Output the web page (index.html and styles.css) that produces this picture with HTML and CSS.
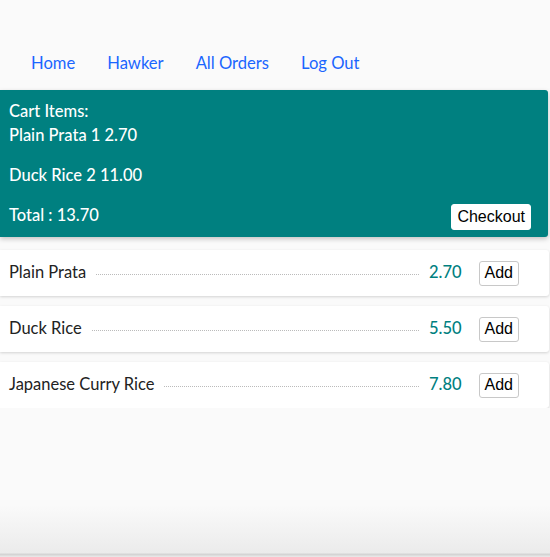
FILE: index.html
```html
<!DOCTYPE html>
<html>
<head>
<meta charset="utf-8">
<link rel="stylesheet" href="styles.css">
</head>
<body>
<nav class="nav">
  <a class="nav-link" href="#">Home</a>
  <a class="nav-link" href="#">Hawker</a>
  <a class="nav-link" href="#">All Orders</a>
  <a class="nav-link" href="#">Log Out</a>
</nav>
<section class="cart">
  <div class="cart-title">Cart Items:</div>
  <div class="cart-item">Plain Prata 1 2.70</div>
  <div class="cart-item">Duck Rice 2 11.00</div>
  <div class="cart-total">
    <span>Total : 13.70</span>
    <button class="btn btn-checkout">Checkout</button>
  </div>
</section>
<section class="menu">
  <div class="card">
    <span class="item-name">Plain Prata</span>
    <span class="dots"></span>
    <span class="price">2.70</span>
    <button class="btn btn-add">Add</button>
  </div>
  <div class="card">
    <span class="item-name">Duck Rice</span>
    <span class="dots"></span>
    <span class="price">5.50</span>
    <button class="btn btn-add">Add</button>
  </div>
  <div class="card">
    <span class="item-name">Japanese Curry Rice</span>
    <span class="dots"></span>
    <span class="price">7.80</span>
    <button class="btn btn-add">Add</button>
  </div>
</section>
</body>
</html>
```
FILE: styles.css
```css
html {
  height: 557px;
  background: linear-gradient(to bottom, #fafafa 0, #fafafa 505px, #ebebeb 553px, #d4d4d4 554px, #d4d4d4 555px, #e6e6e6 556px);
}
body {
  margin: 0;
  font-family: Lato, "Open Sans", sans-serif;
  font-size: 16.5px;
  color: #222;
}
.nav {
  display: flex;
  padding: 52px 0 0 15px;
  height: 90px;
  box-sizing: border-box;
}
.nav-link {
  color: #1a66ff;
  text-decoration: none;
  padding: 0 16px;
  line-height: 22px;
  font-size: 16.6px;
}
.cart {
  background: #008080;
  color: #fff;
  width: 548px;
  border-radius: 0 3px 3px 0;
  box-shadow: 0 2px 5px rgba(0,0,0,0.22);
  padding: 9px 0 8px 9px;
  box-sizing: border-box;
  line-height: 24px;
  font-weight: 500;
}
.cart-item {
  margin-bottom: 16px;
}
.cart-total {
  display: flex;
  justify-content: space-between;
  align-items: center;
  padding-right: 17px;
  height: 28px;
  margin-top: -2px;
}
.btn {
  font-family: "Liberation Sans", Arial, sans-serif;
  font-size: 16px;
  color: #000;
  background: #fff;
  border: 1px solid #c8c8c8;
  border-radius: 3px;
  padding: 0 5px;
}
.btn-checkout {
  height: 26px;
  border-color: #fff;
  margin-top: 4px;
}
.menu {
  display: flex;
  flex-direction: column;
  gap: 10px;
  margin-top: 13px;
}
.card {
  display: flex;
  align-items: center;
  width: 549px;
  height: 46px;
  box-sizing: border-box;
  background: #fff;
  border-radius: 0 3px 3px 0;
  box-shadow: 0 1px 3px rgba(0,0,0,0.16);
  padding: 0 30px 0 9px;
}
.item-name {
  color: #222;
  margin-top: -3px;
}
.dots {
  flex: 1;
  border-bottom: 1px dotted #bbb;
  margin: 2px 10px 0;
}
.price {
  color: #008080;
  font-weight: 500;
  margin-right: 17px;
  margin-top: -3px;
}
.btn-add {
  height: 25px;
  padding: 0 5px;
}
```
